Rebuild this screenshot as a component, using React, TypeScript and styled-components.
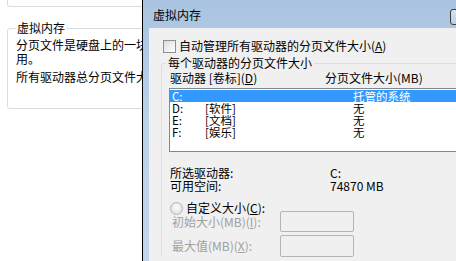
import React from "react";
import styled, { createGlobalStyle } from "styled-components";

const GlobalStyle = createGlobalStyle`
  html, body {
    margin: 0;
    padding: 0;
    background: #ffffff;
  }
  body {
    font-family: "SimSun", "NSimSun", "Noto Sans CJK SC", sans-serif;
    font-size: 12px;
    color: #000;
  }
`;

const cjk = `"SimSun", "NSimSun", "Noto Sans CJK SC", sans-serif`;

const Desktop = styled.div`
  position: relative;
  width: 456px;
  height: 261px;
  overflow: hidden;
  background: #ffffff;
`;

const BackPanel = styled.div`
  display: flex;
  flex-direction: column;
  width: 170px;
  padding-left: 7px;
`;

const TopBoxEnd = styled.div`
  height: 6px;
  border: 1px solid #d5dfe5;
  border-top: none;
  border-radius: 0 0 3px 3px;
`;

const GroupBox = styled.fieldset`
  margin: 14px 0 0;
  padding: 3px 8px 0;
  height: 83px;
  border: 1px solid #d5dfe5;
  border-radius: 3px;
  font-family: ${cjk};
  font-size: 12px;
`;

const GroupLegend = styled.legend`
  padding: 0 1px;
  margin-left: 0;
  line-height: 14px;
`;

const Para = styled.p<{ $gap?: number }>`
  margin: ${(p) => p.$gap ?? 0}px 0 0;
  line-height: 14px;
  white-space: nowrap;
`;

const Dialog = styled.div`
  position: absolute;
  left: 142px;
  top: 0;
  width: 359px;
  height: 300px;
  box-sizing: border-box;
  border-left: 1px solid #000;
  background: linear-gradient(180deg, #a9c4e1 0%, #bcd2ea 40%, #c3d7ed 100%);
  padding: 0 6px;
  display: flex;
  flex-direction: column;
`;

const TitleBar = styled.div`
  height: 28px;
  display: flex;
  align-items: center;
  padding-left: 4px;
`;

const Title = styled.span`
  line-height: 14px;
  padding-top: 2px;
  color: #000;
`;

const CloseButton = styled.div`
  margin-left: auto;
  margin-top: 6px;
  width: 43px;
  height: 14px;
  border: 1px solid #3c3c3c;
  border-radius: 3px;
  background: linear-gradient(#d9e4f0, #b9cde3);
`;

const Body = styled.div`
  flex: 1;
  background: #f0f0f0;
  padding: 11px 0 0 12px;
  display: flex;
  flex-direction: column;
`;

const CheckRow = styled.label`
  display: flex;
  align-items: center;
  gap: 3px;
  height: 14px;
  padding-left: 2px;
  line-height: 14px;
`;

const CheckBox = styled.span`
  width: 11px;
  height: 11px;
  border: 1px solid #8f8f8f;
  background: linear-gradient(135deg, #dcdcdc, #ffffff);
  box-sizing: content-box;
`;

const DriveGroup = styled.fieldset`
  margin: 3px 0 0;
  padding: 1px 0 0 7px;
  border: 1px solid #d5dfe5;
  border-right: none;
  border-bottom: none;
  border-radius: 3px 0 0 0;
  display: flex;
  flex-direction: column;
`;

const DriveLegend = styled.legend`
  padding: 0 2px;
  margin-left: -3px;
  line-height: 14px;
`;

const HeaderRow = styled.div`
  display: grid;
  grid-template-columns: 155px auto;
  line-height: 14px;
  padding-left: 1px;
`;

const ListBox = styled.div`
  margin-top: 3px;
  height: 61px;
  background: #fff;
  border: 1px solid #828790;
  border-right: none;
  padding-top: 1px;
`;

const ListRow = styled.div<{ $selected?: boolean }>`
  display: grid;
  grid-template-columns: 33px 148px auto;
  height: 12px;
  line-height: 12px;
  font-size: 11.5px;
  padding-left: 2px;
  background: ${(p) => (p.$selected ? "#3399ff" : "transparent")};
  color: ${(p) => (p.$selected ? "#fff" : "#000")};
`;

const InfoBlock = styled.div`
  margin-top: 14px;
  display: grid;
  grid-template-columns: 160px auto;
  line-height: 13px;
  padding-left: 1px;
`;

const RadioRow = styled.div`
  margin-top: 9px;
  display: flex;
  align-items: center;
  gap: 3px;
  height: 14px;
  line-height: 14px;
  padding-left: 1px;
`;

const Radio = styled.span`
  width: 11px;
  height: 11px;
  border-radius: 50%;
  border: 1px solid #b4b4b4;
  background: radial-gradient(circle at 50% 40%, #ffffff, #d6d6d6);
`;

const SizeRow = styled.div<{ $gap: number }>`
  margin-top: ${(p) => p.$gap}px;
  display: flex;
  align-items: center;
  padding-left: 3px;
`;

const SizeLabel = styled.span`
  width: 108px;
  color: #a0a0a0;
  line-height: 14px;
`;

const SizeInput = styled.div<{ $h: number }>`
  width: 72px;
  height: ${(p) => p.$h}px;
  border: 1px solid #b4b4b4;
  border-radius: 2px;
  background: #f0f0f0;
`;

const drives = [
  { letter: "C:", label: "", size: "托管的系统", selected: true },
  { letter: "D:", label: "[软件]", size: "无" },
  { letter: "E:", label: "[文档]", size: "无" },
  { letter: "F:", label: "[娱乐]", size: "无" },
];

export default function App() {
  return (
    <Desktop>
      <GlobalStyle />
      <BackPanel>
        <TopBoxEnd />
        <GroupBox>
          <GroupLegend>虚拟内存</GroupLegend>
          <Para>分页文件是硬盘上的一块区域，Windows 当作 RAM 使</Para>
          <Para>用。</Para>
          <Para $gap={4}>所有驱动器总分页文件大小：</Para>
        </GroupBox>
      </BackPanel>

      <Dialog>
        <TitleBar>
          <Title>虚拟内存</Title>
          <CloseButton />
        </TitleBar>
        <Body>
          <CheckRow>
            <CheckBox />
            <span>
              自动管理所有驱动器的分页文件大小(<u>A</u>)
            </span>
          </CheckRow>
          <DriveGroup>
            <DriveLegend>每个驱动器的分页文件大小</DriveLegend>
            <HeaderRow>
              <span>
                驱动器 [卷标](<u>D</u>)
              </span>
              <span>分页文件大小(MB)</span>
            </HeaderRow>
            <ListBox>
              {drives.map((d) => (
                <ListRow key={d.letter} $selected={d.selected}>
                  <span>{d.letter}</span>
                  <span>{d.label}</span>
                  <span>{d.size}</span>
                </ListRow>
              ))}
            </ListBox>
            <InfoBlock>
              <span>所选驱动器:</span>
              <span>C:</span>
              <span>可用空间:</span>
              <span>74870 MB</span>
            </InfoBlock>
            <RadioRow>
              <Radio />
              <span>
                自定义大小(<u>C</u>):
              </span>
            </RadioRow>
            <SizeRow $gap={-4}>
              <SizeLabel>
                初始大小(MB)(<u>I</u>):
              </SizeLabel>
              <SizeInput $h={19} />
            </SizeRow>
            <SizeRow $gap={3}>
              <SizeLabel>
                最大值(MB)(<u>X</u>):
              </SizeLabel>
              <SizeInput $h={20} />
            </SizeRow>
          </DriveGroup>
        </Body>
      </Dialog>
    </Desktop>
  );
}
